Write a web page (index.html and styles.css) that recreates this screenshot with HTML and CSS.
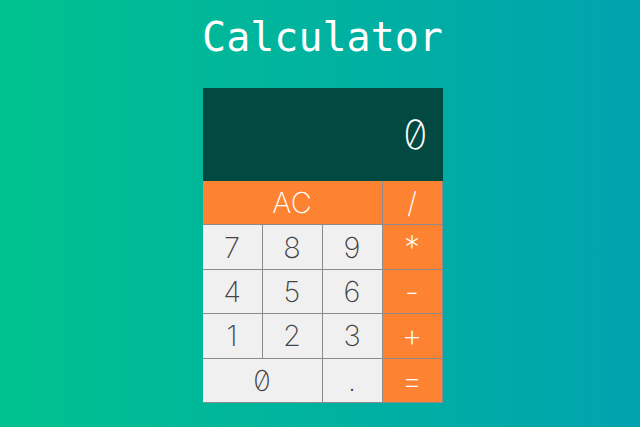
FILE: index.html
```html
<!DOCTYPE html>
<html lang="en">
<head>
<meta charset="utf-8">
<title>Calculator</title>
<link rel="stylesheet" href="styles.css">
</head>
<body>
<h1 class="title">Calculator</h1>
<div class="calc">
  <div class="display">0</div>
  <div class="keys">
    <button class="key op span3">AC</button>
    <button class="key op">/</button>
    <button class="key">7</button>
    <button class="key">8</button>
    <button class="key">9</button>
    <button class="key op sym">*</button>
    <button class="key">4</button>
    <button class="key">5</button>
    <button class="key">6</button>
    <button class="key op sym">-</button>
    <button class="key">1</button>
    <button class="key">2</button>
    <button class="key">3</button>
    <button class="key op sym">+</button>
    <button class="key span2">0</button>
    <button class="key">.</button>
    <button class="key op sym">=</button>
  </div>
</div>
</body>
</html>
```
FILE: styles.css
```css
html, body {
  margin: 0;
  height: 100%;
}
body {
  background: linear-gradient(to right, #00c28f, #00a3af);
  display: flex;
  flex-direction: column;
  align-items: center;
  padding-left: 5px;
  box-sizing: border-box;
}
.title {
  margin: 13px 0 27px;
  font-family: "DejaVu Sans Mono", monospace;
  font-weight: normal;
  font-size: 40px;
  line-height: 48px;
  color: #ffffff;
}
.calc {
  width: 240px;
}
.display {
  height: 93px;
  background: #024a41;
  color: #ffffff;
  font-family: "Inter", "Roboto", sans-serif;
  font-feature-settings: "zero" 1;
  font-weight: 200;
  font-size: 40px;
  display: flex;
  align-items: center;
  justify-content: flex-end;
  padding-right: 15px;
  box-sizing: border-box;
}
.keys {
  display: grid;
  grid-template-columns: repeat(4, 60px);
  grid-auto-rows: 44.4px;
}
.key {
  appearance: none;
  margin: 0;
  padding: 0;
  border: 0;
  border-right: 1px solid #8b8b8b;
  border-bottom: 1px solid #8b8b8b;
  background: #f0f0f0;
  color: #444444;
  font-family: "Inter", "Roboto", sans-serif;
  font-feature-settings: "zero" 1;
  font-weight: 200;
  font-size: 29px;
  box-sizing: border-box;
}
.op {
  background: #fd8332;
  color: #ffffff;
}
.sym {
  font-size: 32px;
}
.span3 {
  grid-column: span 3;
}
.span2 {
  grid-column: span 2;
}
```
